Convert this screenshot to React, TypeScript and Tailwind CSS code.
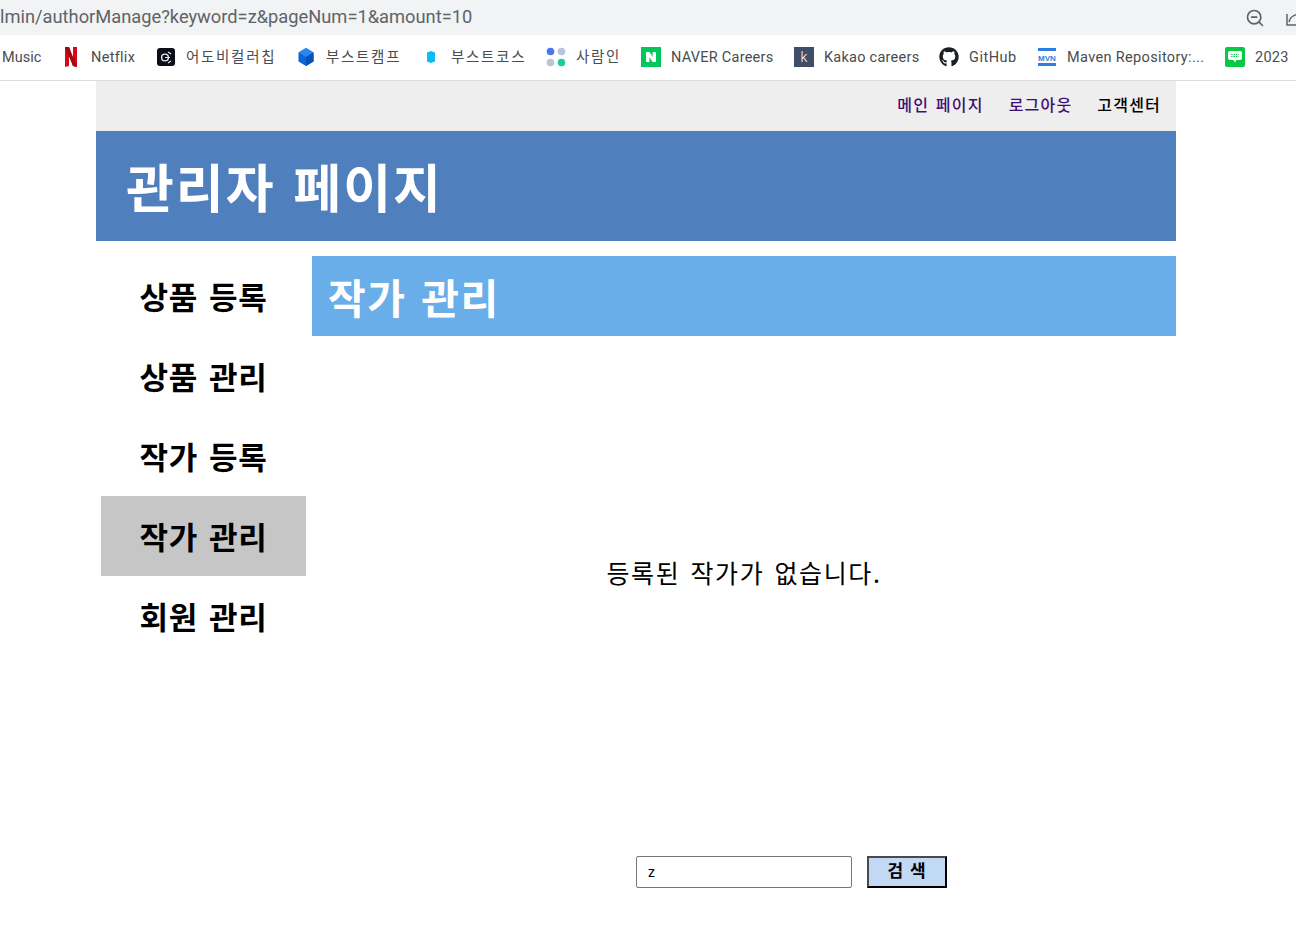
import { ZoomOut } from "lucide-react";
import { FaGithub } from "react-icons/fa";

const ui = "font-['Roboto','Noto_Sans_CJK_KR',sans-serif]";
const kr = "font-['Noto_Sans_CJK_KR','Noto_Sans',sans-serif]";

const NetflixIcon = () => (
  <svg width="16" height="22" viewBox="0 0 16 22">
    <path d="M2 1h4l4 12V1h4v20l-4-1L6 9v11l-4 1z" fill="#d50a14" />
    <path d="M6 1l8 20-4-1L2 1z" fill="#a5060f" />
  </svg>
);

const AdobeIcon = () => (
  <svg width="18" height="18" viewBox="0 0 18 18">
    <rect width="18" height="18" rx="3" fill="#0b0d18" />
    <circle cx="8" cy="9.5" r="3.4" fill="none" stroke="#e8e8f0" strokeWidth="1.4" />
    <path d="M11 4l3 2M11 15l3-2M8 9.5h5" stroke="#e8e8f0" strokeWidth="1.2" />
  </svg>
);

const CubeIcon = () => (
  <svg width="16" height="18" viewBox="0 0 16 18">
    <path d="M8 0l7.5 4.5v9L8 18 .5 13.5v-9z" fill="#0d63d8" />
    <path d="M8 9l7.5-4.5L8 0 .5 4.5z" fill="#2a86f0" />
    <path d="M8 9v9l7.5-4.5v-9z" fill="#0a4fb4" />
  </svg>
);

const CourseIcon = () => (
  <svg width="16" height="18" viewBox="0 0 16 18">
    <path d="M4 4.500L8 3l4 1.500v9L8 15l-4-1.500z" fill="#0bbcf5" />
  </svg>
);

const SaraminIcon = () => (
  <svg width="20" height="20" viewBox="0 0 20 20">
    <circle cx="4.500" cy="4.500" r="3.800" fill="#4b74ee" />
    <circle cx="15.500" cy="4.500" r="3.800" fill="#b8c4da" />
    <circle cx="4.500" cy="15.500" r="3.800" fill="#b8c4da" />
    <circle cx="15.500" cy="15.500" r="3.800" fill="#14cf9f" />
  </svg>
);

const NaverIcon = () => (
  <div className="flex h-5 w-5 items-center justify-center bg-[#03c75a]">
    <svg width="10" height="10" viewBox="0 0 10 10">
      <path d="M0 0h3.400l3.200 4.700V0H10v10H6.600L3.400 5.300V10H0z" fill="#fff" />
    </svg>
  </div>
);

const KakaoIcon = () => (
  <div className={`flex h-5 w-5 items-center justify-center bg-[#3f4d68] text-[14px] leading-none font-light text-white ${ui}`}>k</div>
);

const MavenIcon = () => (
  <svg width="18" height="20" viewBox="0 0 18 20">
    <rect y="1" width="18" height="3" fill="#2f7de1" />
    <rect y="16" width="18" height="3" fill="#2f7de1" />
    <text x="9" y="13.500" textAnchor="middle" fontSize="8" fontWeight="700" fontFamily="Liberation Sans" fill="#2f7de1">MVN</text>
  </svg>
);

const BlogIcon = () => (
  <div className="flex h-5 w-5 items-center justify-center rounded-[2px] bg-[#0ac746]">
    <svg width="14" height="12" viewBox="0 0 14 12">
      <path d="M2 0h10a2 2 0 012 2v5a2 2 0 01-2 2H8.500L7 11.500 5.500 9H2a2 2 0 01-2-2V2a2 2 0 012-2z" fill="#fff" />
      <path d="M3 3.500h8M3 5.500h8" stroke="#0ac746" strokeWidth="1" strokeDasharray="1.500 1" />
    </svg>
  </div>
);

const bookmarks = [
  { icon: <NetflixIcon />, label: "Netflix", cls: "w-[95px]", text: "tracking-[0.3px]" },
  { icon: <AdobeIcon />, label: "어도비컬러칩", cls: "w-[140px]", text: "tracking-[1.7px]" },
  { icon: <CubeIcon />, label: "부스트캠프", cls: "w-[125px]", text: "tracking-[1.7px]" },
  { icon: <CourseIcon />, label: "부스트코스", cls: "w-[125px]", text: "tracking-[1.7px]" },
  { icon: <SaraminIcon />, label: "사람인", cls: "w-[95px]", text: "tracking-[1.7px]" },
  { icon: <NaverIcon />, label: "NAVER Careers", cls: "w-[153px]", text: "tracking-[0.25px]" },
  { icon: <KakaoIcon />, label: "Kakao careers", cls: "w-[145px]", text: "tracking-[0.25px]" },
  { icon: <FaGithub size={20} color="#1b1f23" />, label: "GitHub", cls: "w-[98px]", text: "tracking-[0.5px]" },
  { icon: <MavenIcon />, label: "Maven Repository:...", cls: "w-[188px]", text: "tracking-[0.35px]" },
  { icon: <BlogIcon />, label: "2023", cls: "w-[60px]", text: "tracking-[0.25px]" },
];

const menus = ["상품 등록", "상품 관리", "작가 등록", "작가 관리", "회원 관리"];

export default function App() {
  return (
    <div className={`h-[949px] w-[1296px] overflow-hidden bg-white text-black ${kr}`}>
      <div className="flex h-[35px] items-center justify-between overflow-hidden bg-[#f1f3f4]">
        <span className={`text-[18.300px] leading-none text-[#5f6368] ${ui}`}>
          lmin/authorManage?keyword=z&amp;pageNum=1&amp;amount=10
        </span>
        <div className="flex items-center gap-[21px] text-[#5f6368]">
          <ZoomOut size={20} strokeWidth={2} />
          <svg width="14" height="16" viewBox="0 0 14 16" fill="none" stroke="#5f6368" strokeWidth="1.500" className="-mr-[4px]">
            <path d="M1 4v11h13M3 12c1-5 4-7 11-8" />
          </svg>
        </div>
      </div>

      <div className="flex h-[46px] items-center overflow-hidden border-b border-[#dadce0] pb-px">
        <span className={`mt-[2px] ml-[2px] w-[59px] shrink-0 text-[14.500px] text-[#494c50] ${ui}`}>Music</span>
        {bookmarks.map((b) => (
          <div key={b.label} className={`flex shrink-0 items-center ${b.cls}`}>
            <div className="flex w-5 shrink-0 justify-center">{b.icon}</div>
            <span className={`mt-[2px] ml-[10px] whitespace-nowrap text-[14.500px] text-[#494c50] ${ui} ${b.text}`}>{b.label}</span>
          </div>
        ))}
      </div>

      <div className="mx-auto w-[1080px] -translate-x-[12px]">
        <div className="flex h-[50px] items-center justify-end gap-[25px] bg-[#eeeeee] pr-[15px] pb-[4px] text-[16px] font-medium tracking-[1.2px]">
          <span className="text-[#3f0f73] [word-spacing:2px]">메인 페이지</span>
          <span className="text-[#3f0f73]">로그아웃</span>
          <span className="text-black">고객센터</span>
        </div>
        <div className="flex h-[110px] items-center bg-[#4f7fbd] pl-[30px]">
          <h1 className="text-[52px] leading-none font-bold tracking-[2px] text-white [word-spacing:4px]">관리자 페이지</h1>
        </div>

        <div className="flex pt-[15px]">
          <ul className="ml-[5px] w-[205px] shrink-0">
            {menus.map((m, i) => (
              <li
                key={m}
                className={`flex h-20 items-center justify-center text-[31px] font-bold tracking-[0.8px] [word-spacing:3px] ${i === 3 ? "bg-[#c6c6c6]" : ""}`}
              >
                {m}
              </li>
            ))}
          </ul>
          <main className="ml-[6px] flex-1">
            <div className="flex h-20 items-center bg-[#69aee8] pl-4">
              <h2 className="text-[41px] leading-none font-bold tracking-[1.5px] text-white [word-spacing:4px]">작가 관리</h2>
            </div>
            <div className="flex h-[520px] items-center justify-center pb-[47px]">
              <p className="text-[25px] tracking-[1.6px] [word-spacing:3px]">등록된 작가가 없습니다.</p>
            </div>
            <div className="flex items-center justify-center gap-[15px] pl-[95px]">
              <input
                readOnly
                value="z"
                className={`h-8 w-[216px] rounded-[2px] border border-[#767676] px-[11px] text-[14px] outline-none ${ui}`}
              />
              <button className="h-8 w-20 border-2 border-t-[#4a4a4a] border-r-black border-b-black border-l-[#4a4a4a] bg-[#c2d9f5] pb-[5px] text-[17px] leading-none font-bold tracking-[1px] [word-spacing:1px]">
                검 색
              </button>
            </div>
          </main>
        </div>
      </div>
    </div>
  );
}
